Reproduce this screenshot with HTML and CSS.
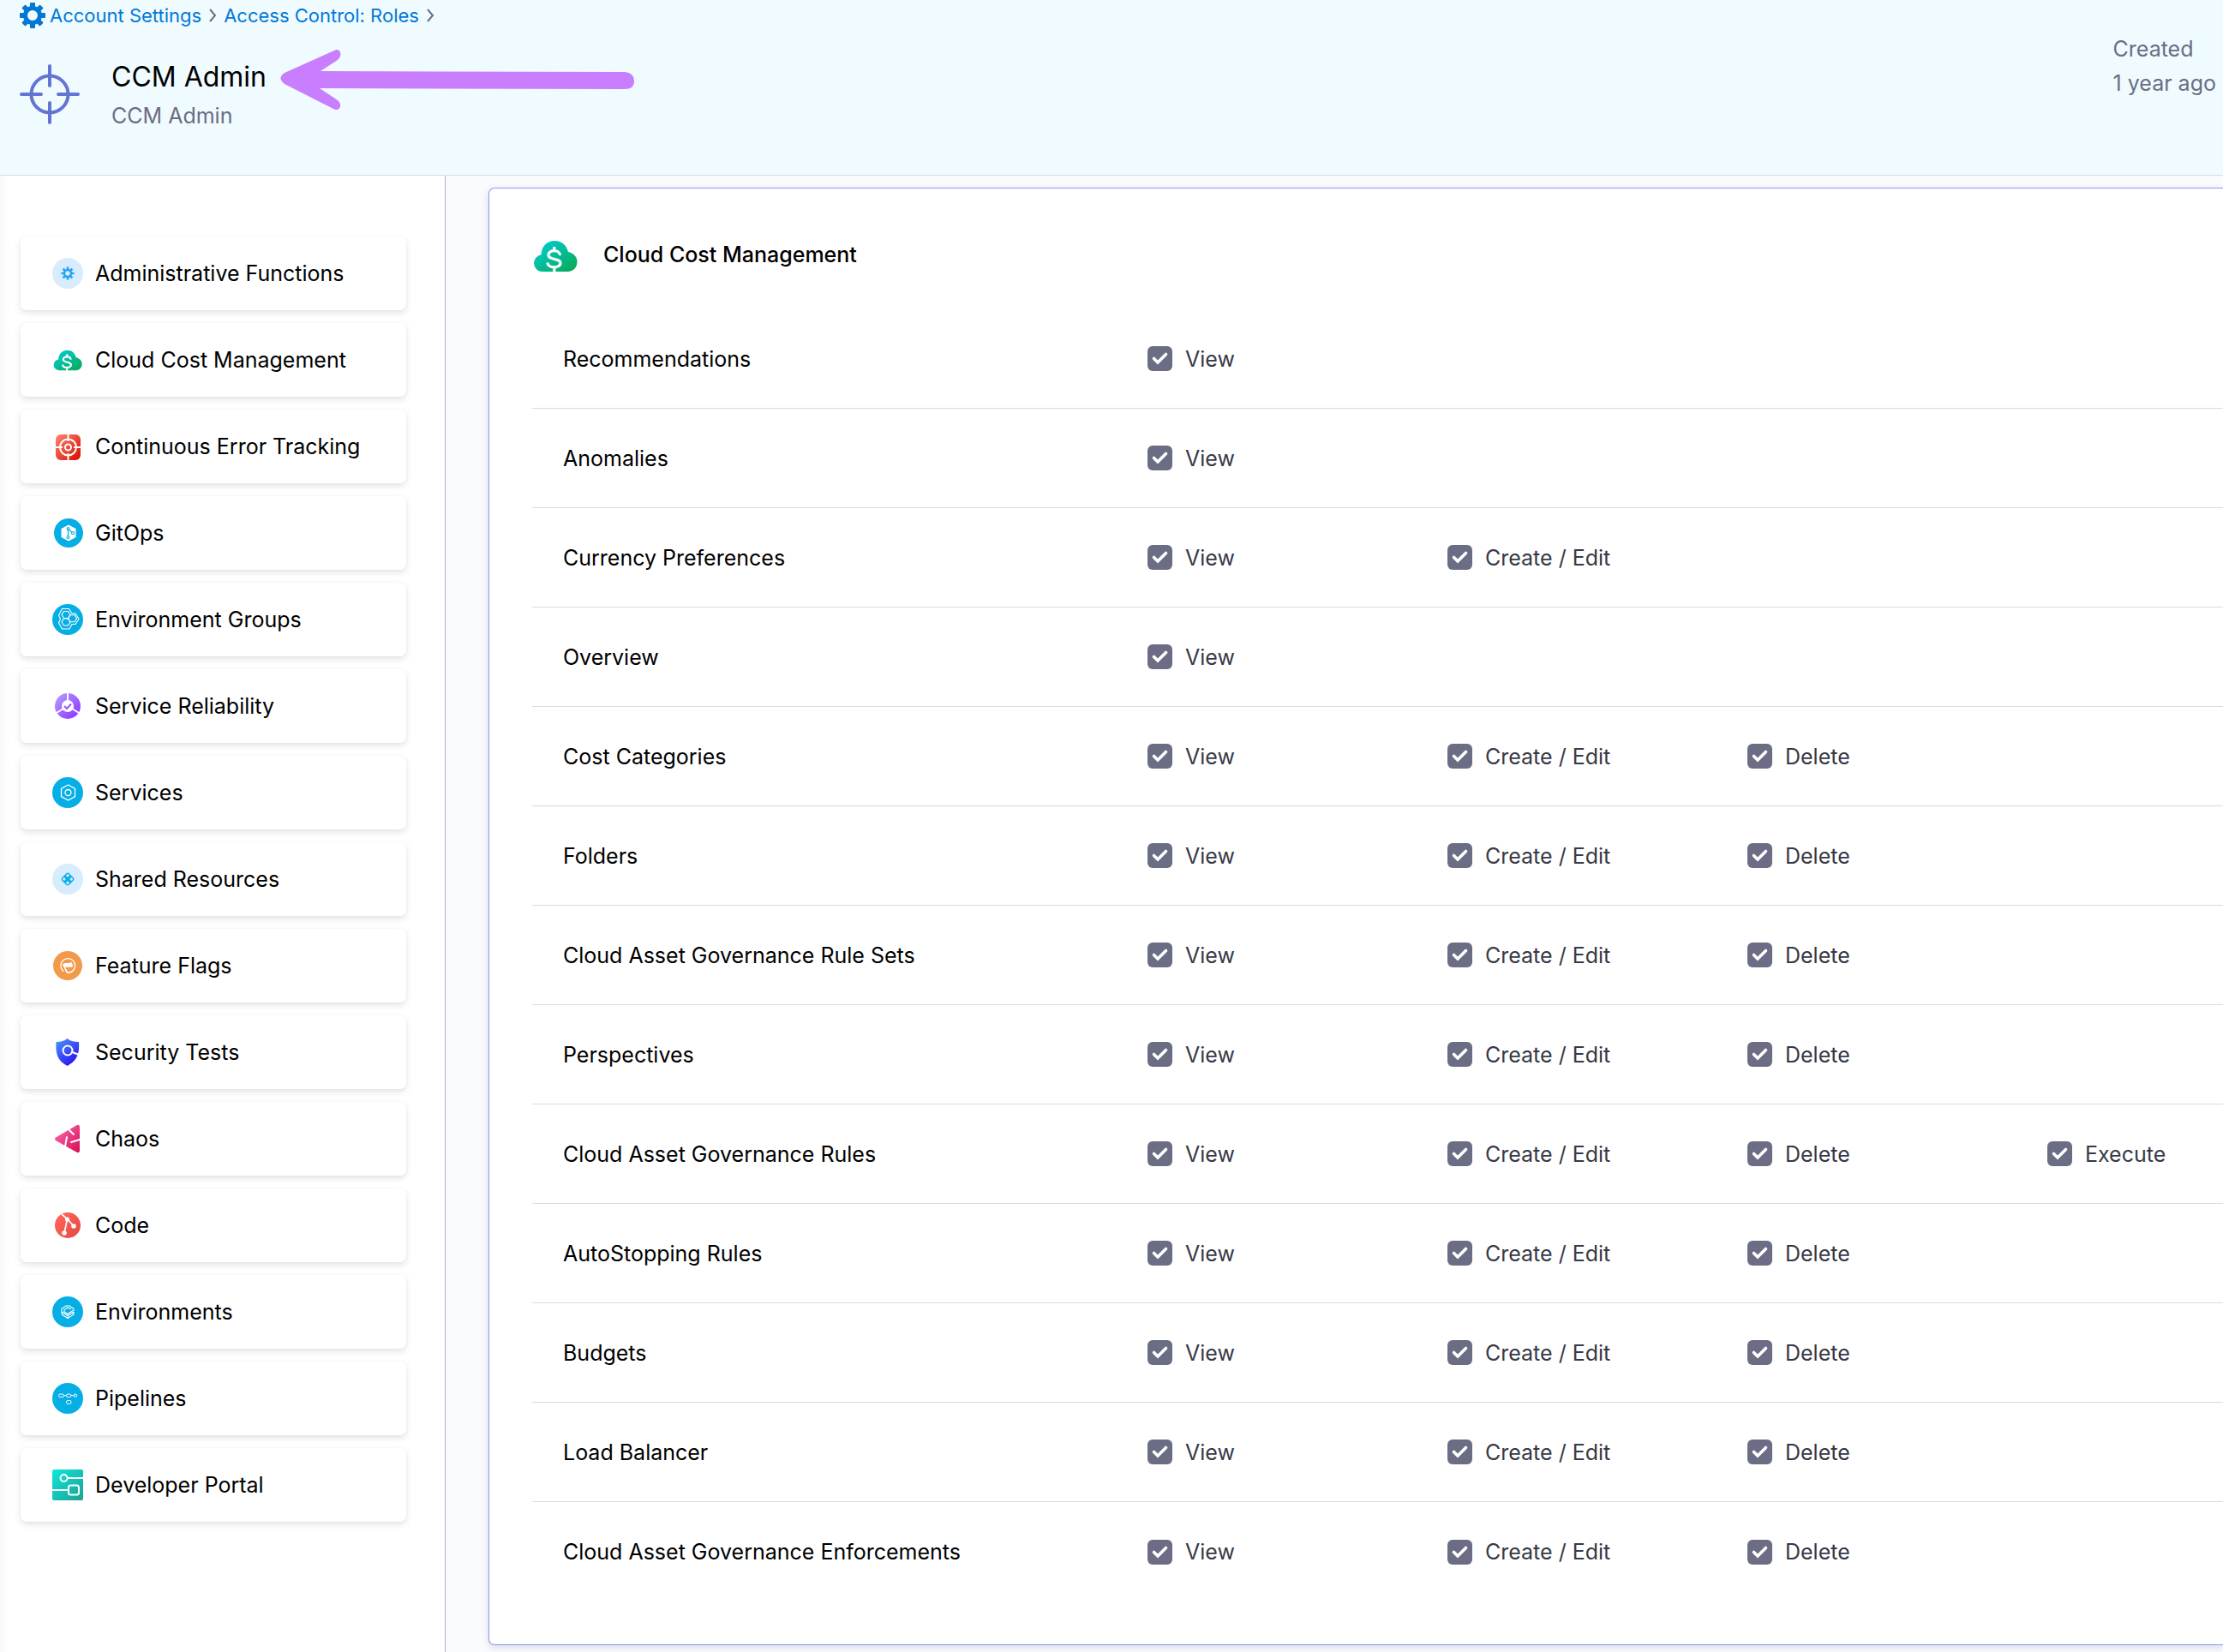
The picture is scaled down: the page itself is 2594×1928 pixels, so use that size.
FILE: index.html
```html
<!DOCTYPE html>
<html lang="en">
<head>
<meta charset="utf-8">
<meta name="viewport" content="width=device-width, initial-scale=1">
<title>CCM Admin</title>
<link rel="stylesheet" href="styles.css">
</head>
<body>
<header class="header">
  <nav class="breadcrumbs" aria-label="Breadcrumb">
    <svg class="gear" viewBox="-15 -15 30 30" aria-hidden="true"><g fill="#0278d5"><rect id="tooth" x="-3" y="-15" width="6" height="8" rx="1"/><use href="#tooth" transform="rotate(45)"/><use href="#tooth" transform="rotate(90)"/><use href="#tooth" transform="rotate(135)"/><use href="#tooth" transform="rotate(180)"/><use href="#tooth" transform="rotate(225)"/><use href="#tooth" transform="rotate(270)"/><use href="#tooth" transform="rotate(315)"/></g><circle r="8.5" fill="none" stroke="#0278d5" stroke-width="5"/></svg>
    <a href="#">Account Settings</a>
    <svg class="chevron" viewBox="0 0 10 16" aria-hidden="true"><path d="M2 1l6 7-6 7"/></svg>
    <a href="#">Access Control: Roles</a>
    <svg class="chevron" viewBox="0 0 10 16" aria-hidden="true"><path d="M2 1l6 7-6 7"/></svg>
  </nav>
  <div class="role">
    <svg class="role-icon" viewBox="0 0 70 70" aria-hidden="true"><g fill="none" stroke="#6374d3" stroke-width="4" stroke-linecap="round"><circle cx="35" cy="35" r="21.5"/><path d="M35 2v23M35 45v23M2 35h23M45 35h23"/></g></svg>
    <div class="role-text">
      <h1>CCM Admin</h1>
      <p>CCM Admin</p>
    </div>
    <div class="created">
      <span>Created</span>
      <span>1 year ago</span>
    </div>
  </div>
  <svg class="arrow" viewBox="0 0 414 72" aria-hidden="true"><path fill="#c97eff" d="M5 28L63 2C69-2 74 7 67 13L47 26L402 27Q413 28 413 37.500Q413 47 402 47L46 46L67 60C74 66 68 74 62 70L5 41Q-4 34 5 28Z"/></svg>
</header>
<div class="layout">
  <aside class="sidebar">
    <button class="card" type="button"><svg viewBox="0 0 36 36" aria-hidden="true"><circle cx="18" cy="18" r="18" fill="#d7ecfd"/><circle cx="18" cy="18" r="4" fill="none" stroke="#24a2f5" stroke-width="2.400"/><path d="M18 10.500v3M18 22.500v3M10.500 18h3M22.500 18h3M12.700 12.700l2.100 2.100M21.200 21.200l2.100 2.100M12.700 23.300l2.100-2.100M21.200 14.800l2.100-2.100" stroke="#24a2f5" stroke-width="2.600"/></svg>Administrative Functions</button>
    <button class="card" type="button"><svg viewBox="0 0 36 36" aria-hidden="true"><use href="#cloud" x="1" y="6" width="34" height="25"/></svg>Cloud Cost Management</button>
    <button class="card" type="button"><svg viewBox="0 0 36 36" aria-hidden="true"><defs><linearGradient id="red" x1="0" y1="0" x2="1" y2="1"><stop stop-color="#ff8672"/><stop offset="1" stop-color="#d60c00"/></linearGradient></defs><rect x="4" y="4" width="29" height="30" rx="6" fill="url(#red)"/><g fill="none" stroke="#fff" stroke-width="2"><circle cx="18.500" cy="19" r="9.500"/><circle cx="18.500" cy="19" r="3.500"/><path d="M18.500 4v8M18.500 26v8M4 19h8M25 19h8"/></g></svg>Continuous Error Tracking</button>
    <button class="card" type="button"><svg viewBox="0 0 36 36" aria-hidden="true"><circle cx="19" cy="18" r="17" fill="#06aee6"/><path fill="#fff" d="M19 8.500l8.500 4.500v10L19 27.500 10.500 23V13z"/><g fill="#fff" stroke="#06aee6" stroke-width="1.200"><path d="M18.500 13.500v9M19 14l5 4"/><circle cx="18.500" cy="13" r="1.300"/><circle cx="18.500" cy="23" r="1.500"/><circle cx="24" cy="18" r="1.500"/></g></svg>GitOps</button>
    <button class="card" type="button"><svg viewBox="0 0 36 36" aria-hidden="true"><circle cx="18" cy="18" r="18" fill="#06aee6"/><g fill="none" stroke="#fff" stroke-width="1.100"><path id="hex" d="M13.500 8.500h5l2.500 4-2.500 4h-5l-2.500-4z"/><use href="#hex" y="8.500"/><use href="#hex" x="7.500" y="4.200"/><path d="M11.500 5.500h8l3.500 5.500h4l4 6.500-4 6h-4l-3 5.500h-8.500l-4-7 2-4.500-2-4.500z"/></g></svg>Environment Groups</button>
    <button class="card" type="button"><svg viewBox="0 0 36 36" aria-hidden="true"><defs><linearGradient id="violet" x1="0" y1="0" x2="1" y2="1"><stop stop-color="#b8a2ff"/><stop offset="1" stop-color="#8a2dff"/></linearGradient></defs><circle cx="18" cy="18" r="15" fill="url(#violet)"/><path fill="none" stroke="#fff" stroke-width="2" d="M18 2v16L4 26.500M18 18l14 8.500"/><circle cx="18" cy="18" r="7" fill="#fff"/><path fill="none" stroke="#9a5aff" stroke-width="2" d="M14 18l3 3 5-5.500"/></svg>Service Reliability</button>
    <button class="card" type="button"><svg viewBox="0 0 36 36" aria-hidden="true"><circle cx="18" cy="18" r="18" fill="#06aee6"/><g fill="none" stroke="#fff" stroke-width="1.300"><path d="M18.500 9l8 4.500v9l-8 4.500-8-4.500v-9z"/><circle cx="18.500" cy="18" r="3.500"/></g></svg>Services</button>
    <button class="card" type="button"><svg viewBox="0 0 36 36" aria-hidden="true"><circle cx="18" cy="18" r="18" fill="#d7ecfd"/><rect x="12" y="12" width="12" height="12" rx="3" transform="rotate(45 18 18)" fill="#06aee6"/><g fill="#d7ecfd"><circle cx="18" cy="13.800" r="1.700"/><circle cx="18" cy="22.200" r="1.700"/><circle cx="13.800" cy="18" r="1.700"/><circle cx="22.200" cy="18" r="1.700"/></g></svg>Shared Resources</button>
    <button class="card" type="button"><svg viewBox="0 0 36 36" aria-hidden="true"><circle cx="18" cy="18" r="17" fill="#f2994a"/><path fill="none" stroke="#fff" stroke-width="1.400" d="M13.500 24.800A8.300 8.300 0 1 1 18 26.300"/><path fill="#fff" d="M12 16.500c2.500-2.500 5-1 7-1.500 1.500-.5 2.500-1 4-.5l1 4.500c-2 1.500-4 .5-6 .8l-3 .2 4 6.500h-2.500z"/></svg>Feature Flags</button>
    <button class="card" type="button"><svg viewBox="0 0 36 36" aria-hidden="true"><defs><linearGradient id="blue" x1="0" y1="0" x2=".7" y2="1"><stop stop-color="#4b9dff"/><stop offset="1" stop-color="#2a10f0"/></linearGradient></defs><path fill="url(#blue)" d="M17.500 2C21 5 26 6 31 6c1 13-2 22-13.500 28C6 28 3.500 19 4.500 6 9 6 14 5 17.500 2z"/><circle cx="18" cy="16" r="5.500" fill="none" stroke="#fff" stroke-width="2"/><path stroke="#fff" stroke-width="2" d="M22 17.500l8 3"/></svg>Security Tests</button>
    <button class="card" type="button"><svg viewBox="0 0 36 36" aria-hidden="true"><defs><linearGradient id="pink" x1="0" y1="0" x2="1" y2="1"><stop stop-color="#ff6fb0"/><stop offset="1" stop-color="#d80b56"/></linearGradient></defs><path fill="url(#pink)" d="M4 16.500L28 2.500q4-2 4 2v27q0 4-4 2L4 20q-2-1.500 0-3.500z"/><path fill="none" stroke="#fff" stroke-width="2" stroke-linecap="round" d="M19 7l6 6M17 16l-2 11M22 22l10-3"/></svg>Chaos</button>
    <button class="card" type="button"><svg viewBox="0 0 36 36" aria-hidden="true"><defs><linearGradient id="coral" x1="0" y1="0" x2="1" y2="1"><stop stop-color="#ff6a5c"/><stop offset="1" stop-color="#e6473f"/></linearGradient></defs><circle cx="18" cy="18" r="15" fill="url(#coral)"/><g fill="#fff"><circle cx="17.500" cy="11" r="2.600"/><circle cx="25" cy="19" r="2.800"/><circle cx="14" cy="27" r="2.800"/><path stroke="#fff" stroke-width="1.700" fill="none" d="M11 5l7 6 7 8M17.500 11L14 27"/></g></svg>Code</button>
    <button class="card" type="button"><svg viewBox="0 0 36 36" aria-hidden="true"><circle cx="18" cy="18" r="18" fill="#06aee6"/><path fill="none" stroke="#fff" stroke-width="1.100" d="M17 10.500l-6 3.800v6.200M19 10.500l6 3.800v1.700l-7 4.500-4-2.500v-2.500l4-2.500 4 2M18 10.500v3M11 18l7 4.500 7-4.500M11 21l7 4.500 7-4.500v-3M18 22.500v3"/></svg>Environments</button>
    <button class="card" type="button"><svg viewBox="0 0 36 36" aria-hidden="true"><circle cx="18" cy="18" r="18" fill="#06aee6"/><g fill="none" stroke="#fff"><rect x="7.500" y="13" width="6" height="3.500" rx="1.700"/><rect x="16.500" y="13" width="5.500" height="3.500" rx="1.700"/><circle cx="27" cy="14.700" r="1.700"/><path d="M13.500 14.700h3M22 14.700h3.300"/><rect x="16.500" y="20.500" width="5.500" height="4" rx="1.700"/></g></svg>Pipelines</button>
    <button class="card" type="button"><svg viewBox="0 0 36 36" aria-hidden="true"><defs><linearGradient id="teal" x1="0" y1="0" x2="1" y2="1"><stop stop-color="#0be8dc"/><stop offset="1" stop-color="#1ea192"/></linearGradient></defs><rect width="36" height="36" rx="2" fill="url(#teal)"/><g fill="none" stroke="#fff" stroke-width="2"><circle cx="13.500" cy="10" r="4"/><path d="M18 10h18M0 24h19"/><rect x="19" y="18.500" width="12" height="11" rx="2.500"/></g></svg>Developer Portal</button>
  </aside>
  <main class="main">
    <section class="panel">
      <div class="panel-head">
        <svg class="panel-icon" viewBox="0 0 52 38" aria-hidden="true">
          <defs><linearGradient id="green" x1="0" y1="0" x2="1" y2="1"><stop stop-color="#00d0e0"/><stop offset="1" stop-color="#0aa84f"/></linearGradient></defs>
          <symbol id="cloud" viewBox="0 0 52 38"><path fill="url(#green)" d="M11 37A9.900 9.900 0 0 1 9.500 17.300C10 7.500 16 1 25.500 1 33 1 39 6 41 14c6 1 10.500 5.500 10.500 11.500C51.500 32 47 37 40.500 37z"/><path fill="none" stroke="#fff" stroke-width="3.200" d="M31.500 18c0-7-13.500-7-13.500-.5 0 6.500 14 3.500 14 9.500 0 6.500-15 6.500-15-.5M24.800 8v4M24.800 31v7"/></symbol>
          <use href="#cloud" width="52" height="38"/>
        </svg>
        <h2>Cloud Cost Management</h2>
      </div>
      <table class="permissions">
        <colgroup><col class="col-name"><col class="col-action"><col class="col-action"><col class="col-action"><col></colgroup>
        <tbody>
          <tr><th scope="row">Recommendations</th><td><label><input type="checkbox" checked>View</label></td><td></td><td></td><td></td></tr>
          <tr><th scope="row">Anomalies</th><td><label><input type="checkbox" checked>View</label></td><td></td><td></td><td></td></tr>
          <tr><th scope="row">Currency Preferences</th><td><label><input type="checkbox" checked>View</label></td><td><label><input type="checkbox" checked>Create / Edit</label></td><td></td><td></td></tr>
          <tr><th scope="row">Overview</th><td><label><input type="checkbox" checked>View</label></td><td></td><td></td><td></td></tr>
          <tr><th scope="row">Cost Categories</th><td><label><input type="checkbox" checked>View</label></td><td><label><input type="checkbox" checked>Create / Edit</label></td><td><label><input type="checkbox" checked>Delete</label></td><td></td></tr>
          <tr><th scope="row">Folders</th><td><label><input type="checkbox" checked>View</label></td><td><label><input type="checkbox" checked>Create / Edit</label></td><td><label><input type="checkbox" checked>Delete</label></td><td></td></tr>
          <tr><th scope="row">Cloud Asset Governance Rule Sets</th><td><label><input type="checkbox" checked>View</label></td><td><label><input type="checkbox" checked>Create / Edit</label></td><td><label><input type="checkbox" checked>Delete</label></td><td></td></tr>
          <tr><th scope="row">Perspectives</th><td><label><input type="checkbox" checked>View</label></td><td><label><input type="checkbox" checked>Create / Edit</label></td><td><label><input type="checkbox" checked>Delete</label></td><td></td></tr>
          <tr><th scope="row">Cloud Asset Governance Rules</th><td><label><input type="checkbox" checked>View</label></td><td><label><input type="checkbox" checked>Create / Edit</label></td><td><label><input type="checkbox" checked>Delete</label></td><td><label><input type="checkbox" checked>Execute</label></td></tr>
          <tr><th scope="row">AutoStopping Rules</th><td><label><input type="checkbox" checked>View</label></td><td><label><input type="checkbox" checked>Create / Edit</label></td><td><label><input type="checkbox" checked>Delete</label></td><td></td></tr>
          <tr><th scope="row">Budgets</th><td><label><input type="checkbox" checked>View</label></td><td><label><input type="checkbox" checked>Create / Edit</label></td><td><label><input type="checkbox" checked>Delete</label></td><td></td></tr>
          <tr><th scope="row">Load Balancer</th><td><label><input type="checkbox" checked>View</label></td><td><label><input type="checkbox" checked>Create / Edit</label></td><td><label><input type="checkbox" checked>Delete</label></td><td></td></tr>
          <tr><th scope="row">Cloud Asset Governance Enforcements</th><td><label><input type="checkbox" checked>View</label></td><td><label><input type="checkbox" checked>Create / Edit</label></td><td><label><input type="checkbox" checked>Delete</label></td><td></td></tr>
        </tbody>
      </table>
    </section>
  </main>
</div>
</body>
</html>
```
FILE: styles.css
```css
* {
  box-sizing: border-box;
}

body {
  margin: 0;
  min-height: 100vh;
  display: flex;
  flex-direction: column;
  background: #fff;
  color: #000;
  font: 400 25px/32px Inter, "Liberation Sans", sans-serif;
}

h1,
h2,
p {
  margin: 0;
}

.header {
  position: relative;
  padding: 0 8px 53px 23px;
  background: #effbff;
  border-bottom: 1px solid #d9dae5;
}

.breadcrumbs {
  display: flex;
  align-items: center;
  height: 36px;
  font-size: 22px;
}

.breadcrumbs a {
  color: #0278d5;
  text-decoration: none;
}

.gear {
  width: 30px;
  height: 30px;
  margin-right: 5px;
}

.chevron {
  width: 10px;
  height: 16px;
  margin: 0 8px;
}

.chevron path {
  fill: none;
  stroke: #6b6d85;
  stroke-width: 2;
}

.role {
  display: flex;
  align-items: flex-start;
  padding-top: 4px;
}

.role-icon {
  width: 70px;
  height: 70px;
  margin-top: 35px;
}

.role-text {
  display: flex;
  flex-direction: column;
  gap: 9px;
  margin-left: 37px;
  padding-top: 30px;
}

h1 {
  font-size: 32px;
  font-weight: 400;
  line-height: 40px;
}

.role-text p,
.created {
  color: #6b6d85;
}

.created {
  display: flex;
  flex-direction: column;
  gap: 8px;
  margin-left: auto;
  padding-top: 1px;
}

.arrow {
  position: absolute;
  left: 327px;
  top: 57px;
  width: 414px;
  height: 72px;
}

.layout {
  flex: 1;
  display: flex;
}

.sidebar {
  flex: none;
  width: 520px;
  display: flex;
  flex-direction: column;
  gap: 15px;
  padding: 71px 45px 16px 24px;
  border-right: 1px solid #b0b1c4;
  background: linear-gradient(to right, #f9f9fa, #fff 12px);
}

.card {
  display: flex;
  align-items: center;
  gap: 14px;
  height: 86px;
  padding: 0 37px;
  border: 0;
  border-radius: 7px;
  background: #fff;
  box-shadow: 0 0 2px rgba(40, 41, 61, 0.04), 0 3px 7px rgba(96, 97, 112, 0.18);
  color: #000;
  font: inherit;
  text-align: left;
  white-space: nowrap;
}

.card svg {
  flex: none;
  width: 36px;
  height: 36px;
}

.main {
  flex: 1;
  min-width: 0;
  padding: 14px 0 7px 50px;
  background: #fafbff;
}

.panel {
  padding: 60px 0 50px 50px;
  border: 1px solid #8a9bff;
  border-right: 0;
  border-radius: 7px 0 0 7px;
  background: #fff;
  box-shadow: 0 0 2px rgba(40, 41, 61, 0.06), 0 3px 8px rgba(96, 97, 112, 0.2);
}

.panel-head {
  display: flex;
  gap: 30px;
  padding-left: 1px;
  height: 81px;
}

.panel-icon {
  width: 52px;
  height: 38px;
}

h2 {
  font-size: 25px;
  font-weight: 500;
  line-height: 34px;
}

.permissions {
  width: 100%;
  table-layout: fixed;
  border-collapse: separate;
  border-spacing: 0;
}

.col-name {
  width: 718px;
}

.col-action {
  width: 350px;
}

.permissions th,
.permissions td {
  height: 116px;
  padding: 0;
  border-bottom: 1px solid #d9dae5;
  font-weight: 400;
  text-align: left;
  vertical-align: middle;
}

.permissions th {
  padding-left: 36px;
}

.permissions tr:last-child > * {
  border-bottom: 0;
}

.permissions label {
  display: flex;
  align-items: center;
  gap: 15px;
  color: #383946;
}

.permissions input {
  appearance: none;
  flex: none;
  width: 29px;
  height: 29px;
  margin: 0;
  border-radius: 6px;
  background: #6b6d85 url("data:image/svg+xml,%3Csvg xmlns='http://www.w3.org/2000/svg' viewBox='0 0 29 29'%3E%3Cpath d='M7.500 14.500l4.500 4.500 9.500-9.500' fill='none' stroke='white' stroke-width='3.600' stroke-linecap='round'/%3E%3C/svg%3E") center / 29px 29px no-repeat;
}
```
